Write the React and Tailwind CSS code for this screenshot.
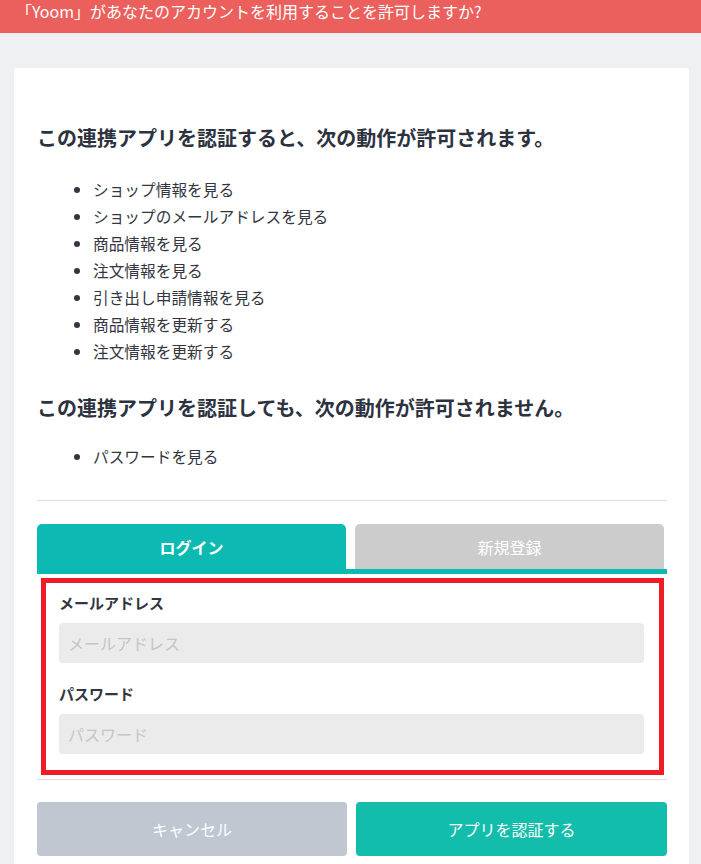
const allowed = [
  'ショップ情報を見る',
  'ショップのメールアドレスを見る',
  '商品情報を見る',
  '注文情報を見る',
  '引き出し申請情報を見る',
  '商品情報を更新する',
  '注文情報を更新する',
]

const denied = ['パスワードを見る']

export default function App() {
  return (
    <div className="min-h-screen bg-[#eff0f4] font-['Noto_Sans_CJK_JP',sans-serif]">
      {/* Header */}
      <div className="h-[33px] bg-[#eb605c] px-[16px] text-[16px] leading-[22px] text-white">
        「Yoom」があなたのアカウントを利用することを許可しますか?
      </div>

      <div className="pt-[35px] pl-[14px] pr-[12px]">
        <div className="rounded-[3px] bg-white pl-[23px] pr-[22px] pt-[55px] pb-[40px]">
          <h2 className="text-[20px] font-bold leading-[30px] text-[#2d3240]">
            この連携アプリを認証すると、次の動作が許可されます。
          </h2>
          <ul className="mt-[23px] list-disc pl-[56px] text-[15.7px] leading-[27px] text-[#333640]">
            {allowed.map(item => (
              <li key={item}>{item}</li>
            ))}
          </ul>

          <h2 className="mt-[28px] text-[20px] font-bold leading-[30px] text-[#2d3240]">
            この連携アプリを認証しても、次の動作が許可されません。
          </h2>
          <ul className="mt-[20px] list-disc pl-[56px] text-[15.7px] leading-[27px] text-[#333640]">
            {denied.map(item => (
              <li key={item}>{item}</li>
            ))}
          </ul>

          <div className="mt-[30px] h-px bg-[#e0e0e0]" />

          {/* Tabs */}
          <div className="mt-[23px]">
            <div className="flex gap-[9px]">
              <div className="flex h-[50px] w-[309px] items-center justify-center rounded-t-[5px] bg-[#0cbab3] pb-[4px] text-[16px] font-bold text-white">
                ログイン
              </div>
              <div className="flex h-[45px] w-[309px] items-center justify-center rounded-t-[5px] bg-[#cccccc] text-[16px] text-white">
                新規登録
              </div>
            </div>
            <div className="-mt-[5px] h-[5px] bg-[#0cbab3]" />
          </div>

          {/* Form */}
          <div className="mt-[4px] ml-[4px] mr-[3px] border-[5px] border-[#ee1c25] pl-[13px] pr-[15px] pt-[10px] pb-[16px]">
            <label className="block text-[15px] font-bold leading-[20px] text-[#333640]">
              メールアドレス
            </label>
            <input
              type="text"
              placeholder="メールアドレス"
              className="mt-[10px] block h-[40px] w-full rounded-[4px] bg-[#ebebeb] px-[9px] text-[16px] outline-none placeholder:text-[#c4c5cc]"
            />
            <label className="mt-[21px] block text-[15px] font-bold leading-[20px] text-[#333640]">
              パスワード
            </label>
            <input
              type="password"
              placeholder="パスワード"
              className="mt-[10px] block h-[40px] w-full rounded-[4px] bg-[#ebebeb] px-[9px] text-[16px] outline-none placeholder:text-[#c4c5cc]"
            />
          </div>

          <div className="mt-[4px] h-px bg-[#e0e0e0]" />

          {/* Buttons */}
          <div className="mt-[22px] flex gap-[9px]">
            <button className="h-[54px] w-[310px] rounded-[4px] bg-[#c0c7d1] text-[16px] text-white">
              キャンセル
            </button>
            <button className="h-[54px] flex-1 rounded-[4px] bg-[#13bdac] text-[16px] text-white">
              アプリを認証する
            </button>
          </div>
        </div>
      </div>
    </div>
  )
}
